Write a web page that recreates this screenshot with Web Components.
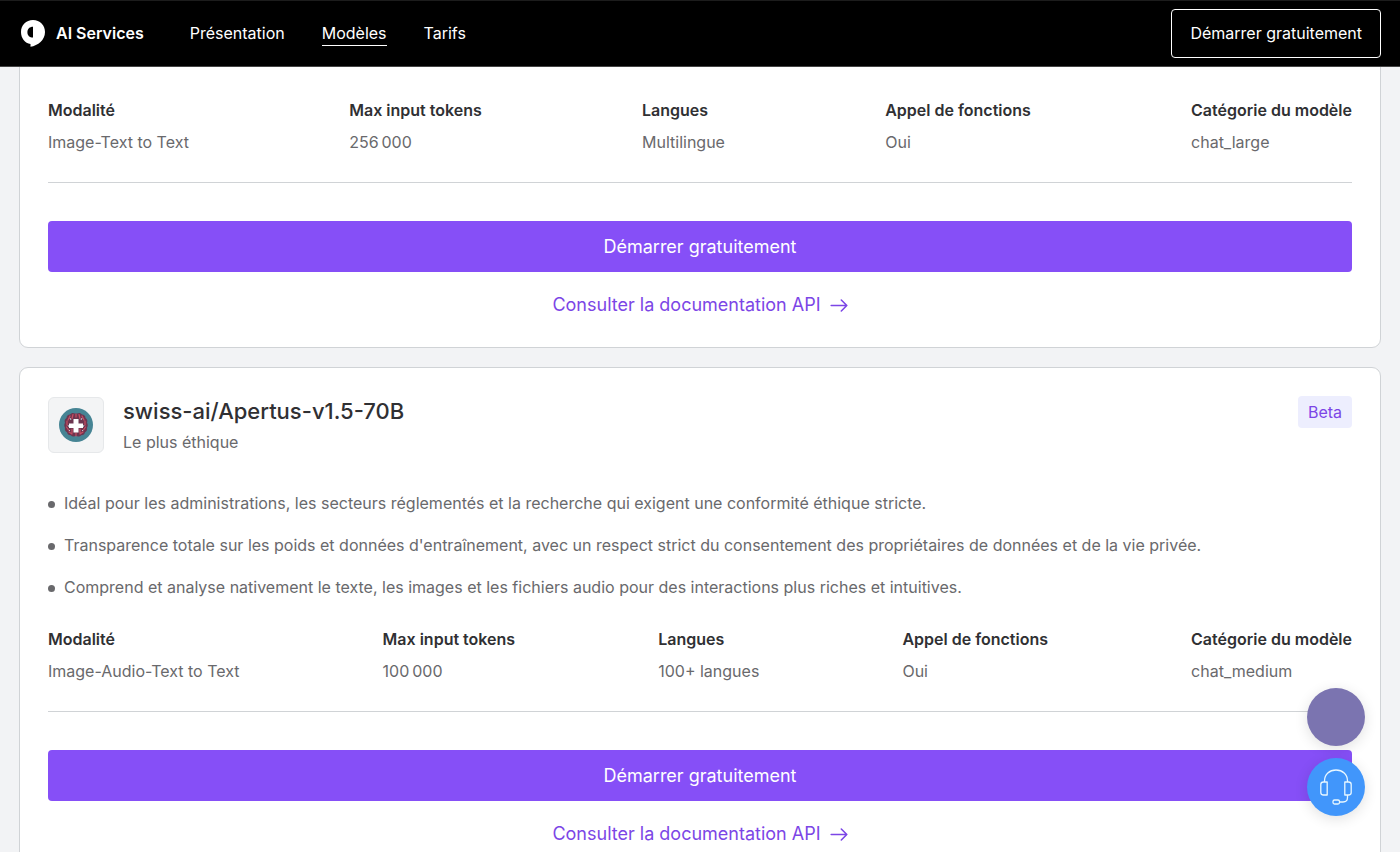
<!DOCTYPE html>
<html lang="fr">
<head>
<meta charset="utf-8">
<meta name="viewport" content="width=device-width, initial-scale=1">
<title>AI Services</title>
<style>
	:root{
		--purple: #864ff7;
		--link: #7c46e6;
		--dark: #303033;
		--grey: #69696c;
		--line: #d0d3d6;
	}
	*{
		box-sizing: border-box;
	}
	html{
		height: 100%;
		overflow: hidden;
	}
	body{
		margin: 0;
		height: 100%;
		overflow: hidden auto;
		scrollbar-width: none;
		background-color: #f2f3f5;
		color: var(--grey);
		font-family: Inter, "Liberation Sans", sans-serif;
		font-size: 16px;
		line-height: 24px;
	}
	main{
		display: flex;
		flex-direction: column;
		gap: 19px;
		margin-top: -26px;
		padding: 0 19px 19px;
	}
</style>
</head>
<body>
	<top-bar>
		<nav-link href="#presentation">Présentation</nav-link>
		<nav-link href="#modeles" active>Modèles</nav-link>
		<nav-link href="#tarifs">Tarifs</nav-link>
	</top-bar>
	<main>
		<model-card>
			<spec-item slot="spec" label="Modalité">Image-Text to Text</spec-item>
			<spec-item slot="spec" label="Max input tokens">256&#8239;000</spec-item>
			<spec-item slot="spec" label="Langues">Multilingue</spec-item>
			<spec-item slot="spec" label="Appel de fonctions">Oui</spec-item>
			<spec-item slot="spec" label="Catégorie du modèle">chat_large</spec-item>
		</model-card>
		<model-card>
			<model-title slot="head" name="swiss-ai/Apertus-v1.5-70B" badge="Beta">Le plus éthique</model-title>
			<feature-item slot="feature">Idéal pour les administrations, les secteurs réglementés et la recherche qui exigent une conformité éthique stricte.</feature-item>
			<feature-item slot="feature">Transparence totale sur les poids et données d'entraînement, avec un respect strict du consentement des propriétaires de données et de la vie privée.</feature-item>
			<feature-item slot="feature">Comprend et analyse nativement le texte, les images et les fichiers audio pour des interactions plus riches et intuitives.</feature-item>
			<spec-item slot="spec" label="Modalité">Image-Audio-Text to Text</spec-item>
			<spec-item slot="spec" label="Max input tokens">100&#8239;000</spec-item>
			<spec-item slot="spec" label="Langues">100+ langues</spec-item>
			<spec-item slot="spec" label="Appel de fonctions">Oui</spec-item>
			<spec-item slot="spec" label="Catégorie du modèle">chat_medium</spec-item>
		</model-card>
	</main>
	<help-buttons></help-buttons>

<script>
class TopBar extends HTMLElement{
	constructor(){
		super();
		const shadow = this.attachShadow({mode: 'open'});
		shadow.innerHTML = /*html*/`
		<style>
			:host{
				display: block;
				position: sticky;
				top: 0;
				z-index: 2;
			}
			header{
				box-sizing: border-box;
				display: flex;
				align-items: center;
				height: 67px;
				padding: 0 19px;
				background-color: #000;
				border-top: 1px solid #1c1c1c;
				border-bottom: 1px solid #444;
				color: #fff;
			}
			.brand{
				display: flex;
				align-items: center;
				gap: 9px;
				padding-bottom: 1px;
				color: inherit;
				font-weight: 600;
				text-decoration: none;
			}
			.brand svg{
				width: 28px;
				height: 28px;
			}
			nav{
				display: flex;
				gap: 37px;
				margin-left: 46px;
			}
			button{
				margin-left: auto;
				height: 49px;
				padding: 0 18px 1px;
				border: 1px solid #fff;
				border-radius: 4px;
				background: none;
				color: #fff;
				font: inherit;
				cursor: pointer;
			}
		</style>
		<header>
			<a class="brand" href="#">
				<svg viewBox="0 0 28 28" aria-hidden="true">
					<path d="M14 1C7 1 2 6.100 2 13c0 6.200 3.900 11.300 9.500 12v2.800C19 26.600 26 21 26 13 26 6.100 21 1 14 1z" fill="#fff"/>
					<path d="M14 7.800v10.800c-3.400 0-5.600-2.200-5.600-5.400s2.200-5.400 5.600-5.400z" fill="#000"/>
				</svg>
				<span>AI Services</span>
			</a>
			<nav><slot></slot></nav>
			<button type="button">Démarrer gratuitement</button>
		</header>`;
	}
}

class NavLink extends HTMLElement{
	constructor(){
		super();
		const shadow = this.attachShadow({mode: 'open'});
		shadow.innerHTML = /*html*/`
		<style>
			:host{
				display: block;
			}
			a{
				display: block;
				color: #fff;
				text-decoration: none;
				border-bottom: 1px solid transparent;
			}
			:host([active]) a{
				border-color: #fff;
			}
		</style>
		<a><slot></slot></a>`;
	}
	connectedCallback(){
		this.shadowRoot.querySelector('a').href = this.getAttribute('href');
	}
}

class ModelCard extends HTMLElement{
	constructor(){
		super();
		const shadow = this.attachShadow({mode: 'open'});
		shadow.innerHTML = /*html*/`
		<style>
			:host{
				display: block;
				padding: 28px;
				background-color: #fff;
				border: 1px solid var(--line);
				border-radius: 9px;
			}
			.features{
				display: flex;
				flex-direction: column;
				gap: 18px;
			}
			.specs{
				display: flex;
				justify-content: space-between;
				margin-top: 28px;
				padding-bottom: 28px;
				border-bottom: 1px solid var(--line);
			}
			button{
				display: block;
				width: 100%;
				height: 51px;
				margin-top: 38px;
				border: 0;
				border-radius: 4px;
				background-color: var(--purple);
				color: #fff;
				font: inherit;
				font-size: 18px;
				cursor: pointer;
			}
			.docs{
				display: flex;
				justify-content: center;
				align-items: center;
				gap: 9px;
				margin-top: 19px;
				color: var(--link);
				font-size: 18px;
				line-height: 28px;
				text-decoration: none;
			}
			.docs svg{
				width: 18px;
				height: 18px;
			}
		</style>
		<slot name="head"></slot>
		<div class="features" role="list"><slot name="feature"></slot></div>
		<div class="specs"><slot name="spec"></slot></div>
		<button type="button">Démarrer gratuitement</button>
		<a class="docs" href="#docs">
			<span>Consulter la documentation API</span>
			<svg viewBox="0 0 18 18" fill="none" stroke="currentColor" stroke-width="1.600" stroke-linecap="round" stroke-linejoin="round" aria-hidden="true">
				<path d="M1.200 9.500h15.600M11.300 4l5.500 5.500-5.500 5.500"/>
			</svg>
		</a>`;
	}
}

class ModelTitle extends HTMLElement{
	constructor(){
		super();
		const shadow = this.attachShadow({mode: 'open'});
		shadow.innerHTML = /*html*/`
		<style>
			:host{
				display: flex;
				align-items: center;
				gap: 19px;
				margin-bottom: 37px;
			}
			.logo{
				box-sizing: border-box;
				display: flex;
				justify-content: center;
				align-items: center;
				width: 56px;
				height: 56px;
				background-color: #f3f4f5;
				border: 1px solid #e6e8ea;
				border-radius: 6px;
			}
			.logo svg{
				width: 34px;
				height: 34px;
			}
			h2{
				margin: 0 0 4px;
				color: var(--dark);
				font-size: 22px;
				font-weight: 500;
				line-height: 30px;
			}
			p{
				margin: 0;
			}
			.badge{
				align-self: flex-start;
				margin-left: auto;
				padding: 4px 10px;
				border-radius: 4px;
				background-color: #edeefe;
				color: var(--link);
			}
		</style>
		<div class="logo">
			<svg viewBox="0 0 34 34" aria-hidden="true">
				<circle cx="17" cy="17" r="17" fill="#468494"/>
				<path d="M16 5.500c-2-1-4-.5-5 1-2 0-3.500 1.500-3.500 3.500-1.800 1-2.300 3-1.500 4.700-1 1.600-1 3.500 0 5-.5 2 .3 3.700 2 4.600.3 2 2 3.200 3.800 3 1.300 1.500 3 1.500 4.200.7h2c1.200.8 2.900.8 4.200-.7 1.800.2 3.500-1 3.800-3 1.700-.9 2.500-2.600 2-4.600 1-1.500 1-3.400 0-5 .8-1.700.3-3.700-1.500-4.700 0-2-1.500-3.500-3.500-3.500-1-1.500-3-2-5-1z" fill="#6c3650"/>
				<g fill="none" stroke="#c94e62" stroke-width="1.200" stroke-linecap="round">
					<path d="M14 6.500l-1 4M11 8l-2 4M8 13v4M7.500 19l2 3M10 24l3 2M13 21v4M20 6.500l1 4M23 8l2 4M26 13v4M26.500 19l-2 3M24 24l-3 2M21 21v4M17 6v3M17 25v3"/>
				</g>
				<path d="M11 10l1 2M9 17l1 2M23 10l-1 2M25 17l-1 2M10 22l1 1M24 22l-1 1" stroke="#b9c7d2" stroke-width="1"/>
				<path d="M14.500 11h5v4.500H24v4.500h-4.500v4.500h-5V20H10v-4.500h4.500z" fill="#fff"/>
			</svg>
		</div>
		<div>
			<h2></h2>
			<p><slot></slot></p>
		</div>
		<span class="badge"></span>`;
	}
	connectedCallback(){
		this.shadowRoot.querySelector('h2').textContent = this.getAttribute('name');
		this.shadowRoot.querySelector('.badge').textContent = this.getAttribute('badge');
	}
}

class FeatureItem extends HTMLElement{
	constructor(){
		super();
		const shadow = this.attachShadow({mode: 'open'});
		shadow.innerHTML = /*html*/`
		<style>
			:host{
				display: flex;
				gap: 9px;
			}
			:host::before{
				content: "";
				flex: none;
				width: 7px;
				height: 7px;
				margin-top: 10px;
				border-radius: 50%;
				background-color: var(--grey);
			}
		</style>
		<span><slot></slot></span>`;
	}
	connectedCallback(){
		this.setAttribute('role', 'listitem');
	}
}

class SpecItem extends HTMLElement{
	constructor(){
		super();
		const shadow = this.attachShadow({mode: 'open'});
		shadow.innerHTML = /*html*/`
		<style>
			:host{
				display: block;
			}
			dl{
				display: grid;
				gap: 8px;
				margin: 0;
			}
			dt{
				color: var(--dark);
				font-weight: 600;
			}
			dd{
				margin: 0;
			}
		</style>
		<dl>
			<dt></dt>
			<dd><slot></slot></dd>
		</dl>`;
	}
	connectedCallback(){
		this.shadowRoot.querySelector('dt').textContent = this.getAttribute('label');
	}
}

class HelpButtons extends HTMLElement{
	constructor(){
		super();
		const shadow = this.attachShadow({mode: 'open'});
		shadow.innerHTML = /*html*/`
		<style>
			:host{
				position: fixed;
				right: 35px;
				bottom: 36px;
				z-index: 3;
				display: grid;
				gap: 12px;
			}
			button{
				display: grid;
				place-items: center;
				width: 58px;
				height: 58px;
				padding: 0;
				border: 0;
				border-radius: 50%;
				background-color: #7b74b0;
				box-shadow: 0 3px 14px rgba(0, 0, 0, 0.12);
				cursor: pointer;
			}
			.support{
				background-color: #4196fb;
			}
			svg{
				width: 34px;
				height: 38px;
			}
		</style>
		<button type="button" aria-label="Assistant"></button>
		<button type="button" class="support" aria-label="Support">
			<svg viewBox="0 0 34 38" fill="none" stroke="#e8f7ff" stroke-width="1.300" stroke-linejoin="round" aria-hidden="true">
				<path d="M5.500 14v-1C5.500 6.500 10.500 2 17 2s11.500 4.500 11.500 11v1M5.500 14h2.700v13H4.500c-1.800 0-2.700-1-2.700-2.500v-8C1.800 15 2.800 14 4.500 14zM28.500 14h-2.700v13h3.700c1.800 0 2.700-1 2.700-2.500v-8c0-1.500-1-2.500-2.700-2.500zM28.500 27v2.500c0 3-1.500 4.500-4.500 4.500h-3.500"/>
				<rect x="14" y="32" width="6.500" height="4" rx="1.500"/>
			</svg>
		</button>`;
	}
}

customElements.define('top-bar', TopBar);
customElements.define('nav-link', NavLink);
customElements.define('model-card', ModelCard);
customElements.define('model-title', ModelTitle);
customElements.define('feature-item', FeatureItem);
customElements.define('spec-item', SpecItem);
customElements.define('help-buttons', HelpButtons);
</script>
</body>
</html>
